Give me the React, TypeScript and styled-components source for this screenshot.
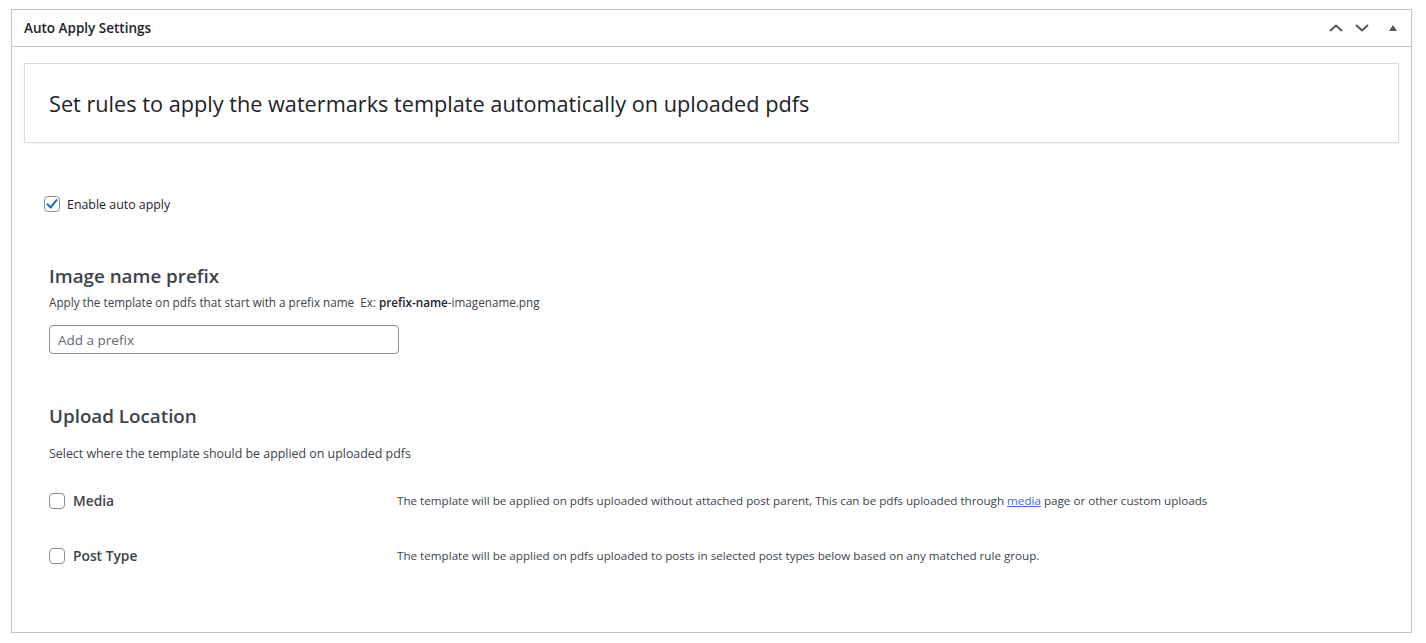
import React from "react";
import styled, { createGlobalStyle } from "styled-components";

const Global = createGlobalStyle`
  html, body { margin: 0; padding: 0; background: #fff; }
  body {
    font-family: "Segoe UI", "Open Sans", Roboto, "Noto Sans", sans-serif;
    color: #3c434a;
    font-size: 13px;
  }
  * { box-sizing: border-box; }
`;

const Postbox = styled.div`
  margin: 9px 14px 0 11px;
  width: 1401px;
  height: 624px;
  border: 1px solid #c3c4c7;
  background: #fff;
  display: flex;
  flex-direction: column;
`;

const Header = styled.div`
  height: 37px;
  border-bottom: 1px solid #c3c4c7;
  display: flex;
  align-items: center;
  padding: 0 0 0 12px;
`;

const Title = styled.h2`
  margin: 0;
  flex: 1;
  font-size: 13.5px;
  font-weight: 600;
  color: #1d2327;
  line-height: 1.4;
`;

const Handles = styled.div`
  display: flex;
  align-items: center;
`;

const HandleBtn = styled.button<{ $w: number }>`
  width: ${(p) => p.$w}px;
  height: 36px;
  border: 0;
  background: none;
  padding: 0;
  display: flex;
  align-items: center;
  justify-content: center;
  color: #50575e;
`;

const Inside = styled.div`
  padding: 16px 12px 0 12px;
  display: flex;
  flex-direction: column;
`;

const Intro = styled.div`
  height: 80px;
  border: 1px solid #dcdcde;
  box-shadow: 0 1px 2px rgba(0, 0, 0, 0.06);
  display: flex;
  align-items: center;
  padding: 3px 24px 0 24px;
`;

const IntroText = styled.h1`
  margin: 0;
  font-size: 21.7px;
  font-weight: 400;
  color: #1d2327;
  line-height: 1.3;
`;

const CheckRow = styled.label<{ $mt: number; $ml: number }>`
  display: flex;
  align-items: center;
  margin-top: ${(p) => p.$mt}px;
  margin-left: ${(p) => p.$ml}px;
  height: 20px;
`;

const Box = styled.span`
  width: 16px;
  height: 16px;
  border: 1px solid #8c8f94;
  border-radius: 4px;
  background: #fff;
  display: inline-flex;
  align-items: center;
  justify-content: center;
  flex-shrink: 0;
`;

const CheckLabel = styled.span`
  margin-left: 7px;
  font-size: 12.4px;
  color: #1d2327;
`;

const Section = styled.div<{ $mt: number }>`
  margin-top: ${(p) => p.$mt}px;
  margin-left: 25px;
  display: flex;
  flex-direction: column;
`;

const SectionTitle = styled.h3<{ $mt?: number }>`
  margin: ${(p) => p.$mt ?? 0}px 0 0 0;
  font-size: 18.8px;
  font-weight: 600;
  color: #3c434a;
  line-height: 28px;
`;

const Desc = styled.p<{ $mt: number; $size: number }>`
  margin: ${(p) => p.$mt}px 0 0 0;
  font-size: ${(p) => p.$size}px;
  line-height: 18px;
  color: #3c434a;
  b { font-weight: 600; color: #1d2327; }
`;

const PrefixInput = styled.input`
  margin-top: 14px;
  width: 350px;
  height: 29px;
  border: 1px solid #8c8f94;
  border-radius: 4px;
  padding: 0 8px;
  font-family: inherit;
  font-size: 13.5px;
  color: #2c3338;
  &::placeholder { color: #646970; }
`;

const LocRow = styled.div<{ $mt: number }>`
  margin-top: ${(p) => p.$mt}px;
  display: grid;
  grid-template-columns: 348px 1fr;
  align-items: center;
`;

const LocLabel = styled.label`
  display: flex;
  align-items: center;
  gap: 8px;
  font-size: 13.8px;
  font-weight: 600;
  color: #3c434a;
`;

const LocDesc = styled.span`
  font-size: 11.65px;
  color: #3c434a;
  a { color: #3b6bdc; text-decoration: underline; }
`;

const Check = () => (
  <svg width="14" height="14" viewBox="0 0 20 20">
    <path d="M3.5 10.5 L8 15 L16.5 4.5" fill="none" stroke="#2271b1" strokeWidth="3" strokeLinecap="round" strokeLinejoin="round" />
  </svg>
);

export default function App() {
  return (
    <>
      <Global />
      <Postbox>
        <Header>
          <Title>Auto Apply Settings</Title>
          <Handles>
            <HandleBtn $w={26} aria-label="Move up">
              <svg width="14" height="8" viewBox="0 0 14 8">
                <path d="M1 7 L7 1.5 L13 7" fill="none" stroke="#50575e" strokeWidth="2" />
              </svg>
            </HandleBtn>
            <HandleBtn $w={26} aria-label="Move down">
              <svg width="14" height="8" viewBox="0 0 14 8">
                <path d="M1 1 L7 6.5 L13 1" fill="none" stroke="#50575e" strokeWidth="2" />
              </svg>
            </HandleBtn>
            <HandleBtn $w={36} aria-label="Toggle panel">
              <svg width="8" height="6" viewBox="0 0 8 6">
                <path d="M0 6 L4 0 L8 6 Z" fill="#50575e" />
              </svg>
            </HandleBtn>
          </Handles>
        </Header>
        <Inside>
          <Intro>
            <IntroText>Set rules to apply the watermarks template automatically on uploaded pdfs</IntroText>
          </Intro>
          <CheckRow $mt={51} $ml={20}>
            <Box>
              <Check />
            </Box>
            <CheckLabel>Enable auto apply</CheckLabel>
          </CheckRow>
          <Section $mt={48}>
            <SectionTitle>Image name prefix</SectionTitle>
            <Desc $mt={3} $size={11.7}>
              Apply the template on pdfs that start with a prefix name&nbsp;&nbsp;Ex: <b>prefix-name</b>-imagename.png
            </Desc>
            <PrefixInput placeholder="Add a prefix" />
            <SectionTitle $mt={48}>Upload Location</SectionTitle>
            <Desc $mt={15} $size={12.4}>Select where the template should be applied on uploaded pdfs</Desc>
            <LocRow $mt={28}>
              <LocLabel>
                <Box />
                Media
              </LocLabel>
              <LocDesc>
                The template will be applied on pdfs uploaded without attached post parent, This can be pdfs uploaded through <a href="#">media</a> page or other custom uploads
              </LocDesc>
            </LocRow>
            <LocRow $mt={36}>
              <LocLabel>
                <Box />
                Post Type
              </LocLabel>
              <LocDesc>The template will be applied on pdfs uploaded to posts in selected post types below based on any matched rule group.</LocDesc>
            </LocRow>
          </Section>
        </Inside>
      </Postbox>
    </>
  );
}
